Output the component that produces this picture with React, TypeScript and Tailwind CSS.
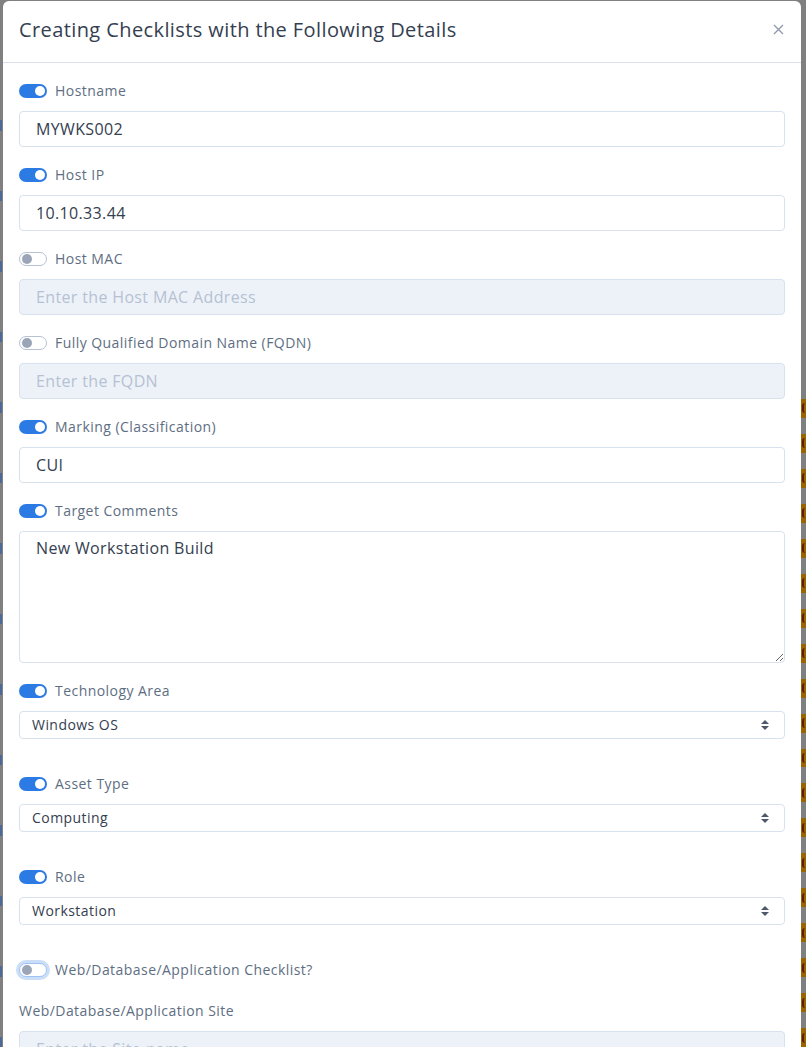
import { ReactNode } from "react";

const font = { fontFamily: '"Open Sans", "Liberation Sans", sans-serif' };

const Toggle = ({ on, focus }: { on: boolean; focus?: boolean }) => {
  if (on) {
    return (
      <span className="flex h-[14px] w-[28px] shrink-0 items-center justify-end rounded-full bg-[#2c7be5] pr-[2px]">
        <span className="h-[10px] w-[10px] rounded-full bg-white" />
      </span>
    );
  }
  return (
    <span
      className={
        "flex h-[14px] w-[28px] shrink-0 items-center rounded-full border bg-white pl-[2px] " +
        (focus
          ? "border-[#9ec2f3] shadow-[0_0_0_3px_rgba(44,123,229,0.25)]"
          : "border-[#b6c1d2]")
      }
    >
      <span className="h-[10px] w-[10px] rounded-full bg-[#9aa6b8]" />
    </span>
  );
};

const SwitchLabel = ({ on, focus, children }: { on: boolean; focus?: boolean; children: ReactNode }) => (
  <div className="flex h-5 items-center gap-2 pt-px text-[14px] tracking-[0.45px] text-[#5e6e82]">
    <Toggle on={on} focus={focus} />
    <span>{children}</span>
  </div>
);

const TextField = ({ value, placeholder, disabled }: { value?: string; placeholder?: string; disabled?: boolean }) => (
  <input
    readOnly
    disabled={disabled}
    value={value ?? ""}
    placeholder={placeholder}
    className={
      "mt-[11px] h-9 w-full rounded border border-[#d8e2ef] px-4 text-base tracking-[0.35px] text-[#344050] outline-none placeholder:text-[#b6c1d2] " +
      (disabled ? "bg-[#edf2f9]" : "bg-white")
    }
    style={font}
  />
);

const SelectField = ({ value }: { value: string }) => (
  <div className="relative mt-[11px] h-7 w-full">
    <select
      value={value}
      onChange={() => {}}
      className="h-7 w-full appearance-none rounded border border-[#d8e2ef] bg-white px-3 text-sm tracking-[0.45px] text-[#344050] outline-none"
      style={font}
    >
      <option>{value}</option>
    </select>
    <svg
      className="pointer-events-none absolute right-[16px] top-[9px]"
      width="8"
      height="10"
      viewBox="0 0 8 10"
    >
      <path d="M4 0 L8 4 H0 Z" fill="#4d5969" />
      <path d="M0 6 H8 L4 10 Z" fill="#4d5969" />
    </svg>
  </div>
);

const badges = Array.from({ length: 19 }, (_, i) => i);

export default function App() {
  return (
    <div className="flex h-[1047px] w-full overflow-hidden bg-[#808080]" style={font}>
      <div className="flex w-[3px] shrink-0 flex-col gap-[60px] pt-[120px]">
        {badges.slice(0, 14).map((i) => (
          <span key={i} className="h-[12px] w-[2px] bg-[#4d6a96]" />
        ))}
      </div>

      <div className="mt-px flex min-w-0 flex-1 flex-col rounded-t-md bg-white">
        <div className="flex h-[62px] shrink-0 items-center justify-between border-b border-[#d8e2ef] pl-4 pr-[17px]">
          <h5 className="mb-[3px] text-[20px] font-medium tracking-[0.4px] text-[#344050]">
            Creating Checklists with the Following Details
          </h5>
          <svg width="11" height="11" viewBox="0 0 11 11" className="mb-[5px]">
            <path d="M1 1 L10 10 M10 1 L1 10" stroke="#8f9bad" strokeWidth="1.4" />
          </svg>
        </div>

        <div className="flex flex-col px-4 pt-[17px]">
          <div className="mb-[17px]">
            <SwitchLabel on>Hostname</SwitchLabel>
            <TextField value="MYWKS002" />
          </div>
          <div className="mb-[17px]">
            <SwitchLabel on>Host IP</SwitchLabel>
            <TextField value="10.10.33.44" />
          </div>
          <div className="mb-[17px]">
            <SwitchLabel on={false}>Host MAC</SwitchLabel>
            <TextField disabled placeholder="Enter the Host MAC Address" />
          </div>
          <div className="mb-[17px]">
            <SwitchLabel on={false}>Fully Qualified Domain Name (FQDN)</SwitchLabel>
            <TextField disabled placeholder="Enter the FQDN" />
          </div>
          <div className="mb-[17px]">
            <SwitchLabel on>Marking (Classification)</SwitchLabel>
            <TextField value="CUI" />
          </div>
          <div className="mb-[17px]">
            <SwitchLabel on>Target Comments</SwitchLabel>
            <textarea
              readOnly
              value="New Workstation Build"
              className="mt-[11px] block h-[132px] w-full resize-y rounded border border-[#d8e2ef] bg-white px-4 py-[4px] text-base tracking-[0.35px] text-[#344050] outline-none"
              style={font}
            />
          </div>
          <div className="mb-[34px]">
            <SwitchLabel on>Technology Area</SwitchLabel>
            <SelectField value="Windows OS" />
          </div>
          <div className="mb-[34px]">
            <SwitchLabel on>Asset Type</SwitchLabel>
            <SelectField value="Computing" />
          </div>
          <div className="mb-[34px]">
            <SwitchLabel on>Role</SwitchLabel>
            <SelectField value="Workstation" />
          </div>
          <div className="mb-[21px]">
            <SwitchLabel on={false} focus>
              Web/Database/Application Checklist?
            </SwitchLabel>
          </div>
          <div>
            <label className="flex h-5 items-center pt-px text-[14px] tracking-[0.45px] text-[#5e6e82]">
              Web/Database/Application Site
            </label>
            <TextField disabled placeholder="Enter the Site name" />
          </div>
        </div>
      </div>

      <div className="flex w-[5px] shrink-0 flex-col gap-[16px] pt-[399px]">
        {badges.map((i) => (
          <span key={i} className="flex h-[19px] w-[5px] items-center bg-[#9a6500] pl-px">
            <span className="h-[10px] w-[3px] rounded-l-full border-l-2 border-[#5a1f0f]" />
          </span>
        ))}
      </div>
    </div>
  );
}
